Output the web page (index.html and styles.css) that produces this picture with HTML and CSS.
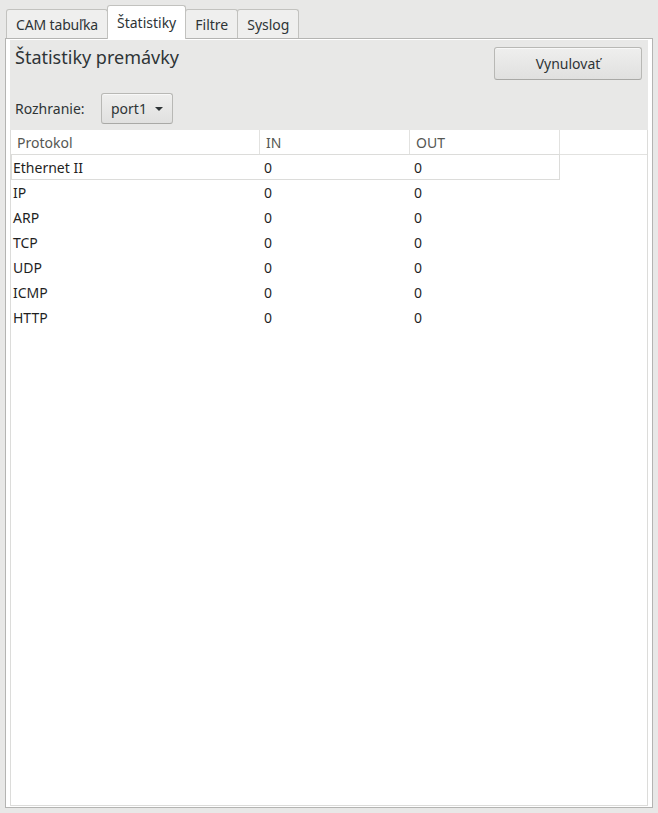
FILE: index.html
```html
<!DOCTYPE html>
<html lang="sk">
<head>
<meta charset="utf-8">
<title>Štatistiky</title>
<link rel="stylesheet" href="styles.css">
</head>
<body>
<div class="notebook">
  <div class="tabs">
    <div class="tab">CAM tabuľka</div>
    <div class="tab active">Štatistiky</div>
    <div class="tab">Filtre</div>
    <div class="tab">Syslog</div>
  </div>
  <div class="frame">
    <div class="inner">
      <div class="header">
        <div class="top-row">
          <div class="title">Štatistiky premávky</div>
          <button class="btn reset">Vynulovať</button>
        </div>
        <div class="iface-row">
          <span class="label">Rozhranie:</span>
          <button class="btn combo">port1
            <svg class="arrow" width="10" height="6" viewBox="0 0 10 6"><path d="M1 1h8l-4 4z" fill="#2e3436"/></svg>
          </button>
        </div>
      </div>
      <div class="table">
        <div class="thead">
          <div class="th">Protokol</div>
          <div class="th">IN</div>
          <div class="th">OUT</div>
          <div class="th"></div>
        </div>
        <div class="row focus"><div class="c1">Ethernet II</div><div class="c2">0</div><div class="c3">0</div></div>
        <div class="row"><div class="c1">IP</div><div class="c2">0</div><div class="c3">0</div></div>
        <div class="row"><div class="c1">ARP</div><div class="c2">0</div><div class="c3">0</div></div>
        <div class="row"><div class="c1">TCP</div><div class="c2">0</div><div class="c3">0</div></div>
        <div class="row"><div class="c1">UDP</div><div class="c2">0</div><div class="c3">0</div></div>
        <div class="row"><div class="c1">ICMP</div><div class="c2">0</div><div class="c3">0</div></div>
        <div class="row"><div class="c1">HTTP</div><div class="c2">0</div><div class="c3">0</div></div>
      </div>
    </div>
  </div>
</div>
</body>
</html>
```
FILE: styles.css
```css
html, body {
  margin: 0;
  padding: 0;
  background: #e8e8e7;
  font-family: "Noto Sans", "DejaVu Sans", sans-serif;
  font-size: 14px;
  color: #2e3436;
}
.notebook {
  margin: 5px 0 0 5px;
  width: 648px;
}
.tabs {
  display: flex;
  align-items: flex-end;
  height: 33px;
  padding-left: 1px;
  position: relative;
  z-index: 1;
}
.tab {
  box-sizing: border-box;
  height: 29px;
  padding: 0 9px;
  display: flex;
  align-items: center;
  border: 1px solid #c2c2bf;
  border-bottom: none;
  border-radius: 3px 3px 0 0;
  background: #efefee;
  margin-right: -1px;
  color: #2e3436;
}
.tab:first-child {
  letter-spacing: -0.15px;
}
.tab.active {
  height: 34px;
  margin-bottom: -1px;
  background: #ffffff;
  padding: 0 9px;
  position: relative;
  z-index: 2;
}
.frame {
  box-sizing: border-box;
  height: 770px;
  border: 1px solid #b4b4b2;
  background: #ffffff;
  padding: 1px 4px 1px 4px;
}
.inner {
  height: 100%;
  display: flex;
  flex-direction: column;
}
.header {
  background: #e8e8e7;
  padding: 7px 6px 6px 5px;
}
.top-row {
  display: flex;
  justify-content: space-between;
  align-items: flex-start;
}
.title {
  font-size: 18px;
  margin-top: -2px;
  color: #2e3436;
}
.btn {
  font-family: inherit;
  font-size: 14px;
  color: #2e3436;
  box-sizing: border-box;
  border: 1px solid #b8b8b5;
  border-bottom-color: #a9a9a6;
  border-radius: 3px;
  background: linear-gradient(#efefee, #e0e0df);
  box-shadow: inset 0 1px #f8f8f8;
  padding: 0;
  margin: 0;
}
.reset {
  width: 148px;
  height: 33px;
}
.iface-row {
  display: flex;
  align-items: center;
  margin-top: 13px;
}
.label {
  width: 86px;
}
.combo {
  width: 72px;
  height: 31px;
  display: flex;
  align-items: center;
  padding-left: 9px;
  gap: 7px;
}
.arrow {
  display: block;
}
.table {
  flex: 1;
  border: 1px solid #dcdcda;
  border-top: none;
  background: #ffffff;
}
.thead {
  display: grid;
  grid-template-columns: 249px 150px 150px 1fr;
  height: 25px;
  border-bottom: 1px solid #e2e2e0;
  box-sizing: border-box;
}
.th {
  display: flex;
  align-items: center;
  padding-left: 6px;
  color: #555753;
  border-right: 1px solid #e2e2e0;
}
.th:last-child {
  border-right: none;
}
.row {
  display: grid;
  grid-template-columns: 249px 150px 150px;
  width: 549px;
  height: 25px;
  box-sizing: border-box;
  color: #1f1f1f;
}
.row > div {
  display: flex;
  align-items: center;
}
.row.focus {
  box-shadow: inset 0 0 0 1px #dcdcda;
  margin-top: -1px;
  height: 26px;
  padding-top: 1px;
}
.c1 { padding-left: 2px; }
.c2, .c3 { padding-left: 4px; }
```
